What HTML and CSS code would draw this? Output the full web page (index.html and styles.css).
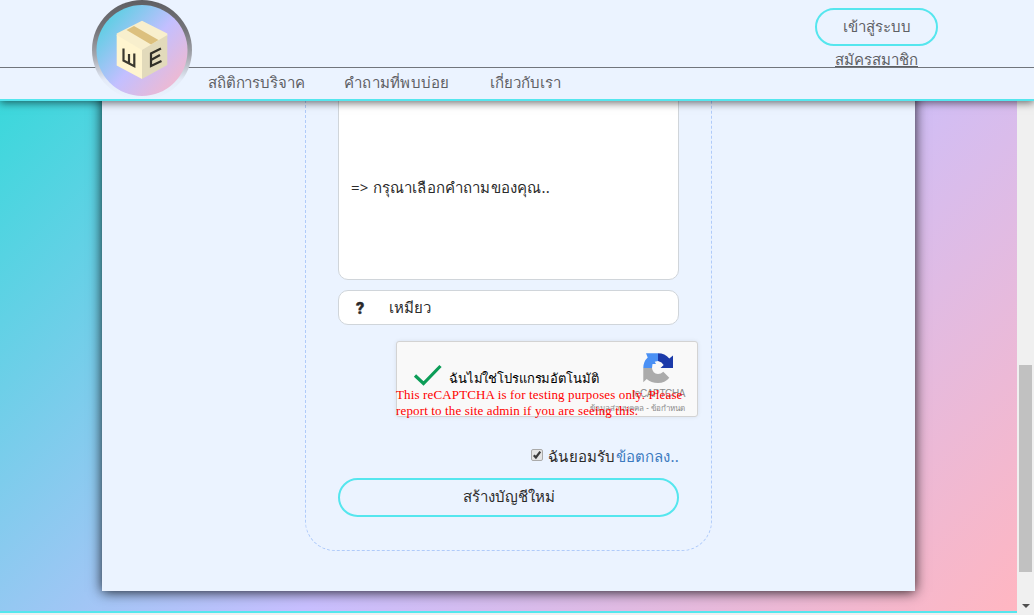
FILE: index.html
```html
<!DOCTYPE html>
<html lang="th">
<head>
<meta charset="utf-8">
<title>สร้างบัญชีใหม่</title>
<link rel="stylesheet" href="styles.css">
</head>
<body>
<header class="header">
  <div class="header-top">
    <div class="account">
      <a class="login">เข้าสู่ระบบ</a>
      <a class="signup">สมัครสมาชิก</a>
    </div>
  </div>
  <nav class="nav">
    <a class="n1">สถิติการบริจาค</a>
    <a class="n2">คำถามที่พบบ่อย</a>
    <a class="n3">เกี่ยวกับเรา</a>
  </nav>
  <svg class="logo" width="100" height="99" viewBox="0 0 100 99">
    <defs>
      <linearGradient id="ring" x1="0" y1="0" x2="0" y2="1"><stop offset="0" stop-color="#5f5f63"/><stop offset=".3" stop-color="#747479"/><stop offset=".55" stop-color="#a3a5ac"/><stop offset=".8" stop-color="#e4ebf8"/><stop offset="1" stop-color="#ebf3ff"/></linearGradient>
      <linearGradient id="fill" x1=".1" y1=".15" x2=".9" y2=".85"><stop offset="0" stop-color="#5ccfe3"/><stop offset=".53" stop-color="#c3bfff"/><stop offset="1" stop-color="#efb9d1"/></linearGradient>
    </defs>
    <circle cx="50" cy="50" r="50" fill="url(#ring)"/>
    <circle cx="50" cy="50.5" r="45.5" fill="url(#fill)"/>
    <path d="M50 20.700 75.300 33.500V36L50 50.700 24.700 36V33.500Z" fill="#f8efcd"/>
    <path d="M24.700 35 50 50V79L24.700 65.500Z" fill="#fff5cf"/>
    <path d="M75.300 35 50 50V79L75.300 65Z" fill="#e2dabb"/>
    <path d="M42 26 66.500 40 59 44.500 34.500 30Z" fill="#dcc07e"/>
    <path d="M31.500 48.500V60.500L42.300 66.200V53.500M37 54V63" fill="none" stroke="#3b392f" stroke-width="2.200"/>
    <path d="M69 48.500 59 53.500V66L69.500 61M59 60 68 55" fill="none" stroke="#302f28" stroke-width="2.200"/>
  </svg>
</header>
<main class="page">
  <section class="panel">
    <form class="form">
      <div class="question-list">=&gt; กรุณาเลือกคำถามของคุณ..</div>
      <div class="answer"><b class="mark">?</b><span>เหมียว</span></div>
      <div class="captcha">
        <svg class="check" width="30" height="22" viewBox="0 0 30 22"><path d="M2 11.500 10.500 19.500 27.500 2" fill="none" stroke="#0c9d58" stroke-width="3.200"/></svg>
        <span class="robot">ฉันไม่ใช่โปรแกรมอัตโนมัติ</span>
        <svg class="recaptcha-logo" width="32" height="32" viewBox="0 0 32 32">
          <path d="M4 1.300H16V9L12.700 9.700 14 12H10.500L10 16H1.300Q1.300 9.500 5.700 5.500Z" fill="#4a90f4"/>
          <path d="M16 1.300Q23 1.300 27.300 6.500L31 3.500V16H18.500L21.700 13 19.500 10.500 16 9Z" fill="#1c3aa9"/>
          <path d="M1.300 16H10Q10.500 21.500 16 22 19 22 21.300 19.700L27.300 25.700Q23 31 16 31 9 31 4.700 27L1.300 30.300Z" fill="#ababab"/>
        </svg>
        <div class="brand">reCAPTCHA</div>
        <div class="terms">ข้อมูลส่วนบุคคล - ข้อกำหนด</div>
        <div class="warning">This reCAPTCHA is for testing purposes only. Please<br>report to the site admin if you are seeing this.</div>
      </div>
      <div class="agree">
        <svg class="checkbox" width="12" height="12" viewBox="0 0 12 12"><rect x=".5" y=".5" width="11" height="11" rx="1.500" fill="#e4e4e4" stroke="#aaa"/><path d="M2.800 6.200 4.900 8.500 9.300 2.600" fill="none" stroke="#3b3b3b" stroke-width="2.200"/></svg>
        <span class="agree-text">ฉันยอมรับ<a class="link">ข้อตกลง..</a></span>
      </div>
      <div class="submit">สร้างบัญชีใหม่</div>
    </form>
  </section>
</main>
<div class="scrollbar"><div class="thumb"></div><div class="arrow"></div></div>
</body>
</html>
```
FILE: styles.css
```css
* { box-sizing: border-box; }
body {
  margin: 0;
  width: 1034px;
  height: 615px;
  overflow: hidden;
  position: relative;
  background: #efefef;
  color: #2b2b2b;
  font: 15px/20px "Noto Sans", "Liberation Sans", sans-serif;
}
span, .nav a { white-space: nowrap; }
.header {
  position: absolute;
  z-index: 2;
  top: 0;
  left: 0;
  width: 1034px;
  height: 101px;
  background: #ebf3ff;
  border-bottom: 2px solid #55e6ee;
  box-shadow: 0 2px 8px rgba(0, 0, 0, .55);
  color: #5e6064;
}
.header-top {
  height: 68px;
  padding: 8px 96px 0 0;
  border-bottom: 1px solid #71757c;
  display: flex;
  justify-content: flex-end;
}
.account { width: 123px; }
.login {
  display: block;
  height: 38px;
  border: 2px solid #55e6ee;
  border-radius: 19px;
  text-align: center;
  line-height: 33px;
}
.signup {
  display: block;
  margin-top: 3px;
  padding-left: 20px;
  line-height: 20px;
  text-decoration: underline;
}
.nav { display: flex; padding: 4px 0 0 208px; line-height: 20px; }
.nav .n1 { width: 136px; letter-spacing: -.15px; }
.nav .n2 { width: 146px; letter-spacing: .25px; }
.logo { position: absolute; left: 92px; top: 0; }
.page {
  width: 1017px;
  height: 613px;
  padding: 20px 102px 22px;
  background: linear-gradient(135deg, #3ad8db 6%, #c8bfff 56%, #ffb6c1 100%);
  border-bottom: 2px solid #55e6ee;
}
.panel {
  height: 571px;
  padding: 0 203px 40px;
  background: #ebf3ff;
  box-shadow: 0 1px 12px rgba(0, 0, 0, .85);
}
.form {
  height: 531px;
  padding: 40px 32px 0;
  border: 1px dashed #b0cbfa;
  border-radius: 30px;
}
.question-list {
  height: 219px;
  padding: 115px 12px 0;
  background: #fff;
  border: 1px solid #d0d5da;
  border-radius: 10px;
  letter-spacing: .17px;
}
.answer {
  display: flex;
  height: 35px;
  margin-top: 10px;
  padding: 6px 17px;
  background: #fff;
  border: 1px solid #d0d5da;
  border-radius: 10px;
}
.mark { width: 33px; font: 900 16px/23px Roboto, sans-serif; -webkit-text-stroke: .4px #222; }
.captcha {
  position: relative;
  width: 302px;
  height: 76px;
  margin: 16px 0 0 58px;
  padding: 22px 0 0 16px;
  display: flex;
  background: #f9f9f9;
  border: 1px solid #d3d3d3;
  border-radius: 3px;
  box-shadow: 0 0 4px rgba(0, 0, 0, .08);
  color: #000;
  font-size: 13px;
}
.robot { margin: 4px 0 0 6px; letter-spacing: -.13px; }
.recaptcha-logo { position: absolute; left: 245px; top: 10px; }
.brand {
  position: absolute;
  right: 12px;
  top: 46px;
  color: #8a8a8a;
  font: 10px/12px "Liberation Sans", sans-serif;
  letter-spacing: -.4px;
}
.terms {
  position: absolute;
  right: 12px;
  top: 60px;
  color: #8a8a8a;
  font-size: 8px;
  line-height: 12px;
}
.warning {
  position: absolute;
  left: -1px;
  top: 45px;
  color: #f00;
  font: 13px/16px "Liberation Serif", serif;
  letter-spacing: .14px;
  white-space: nowrap;
}
.agree {
  display: flex;
  justify-content: flex-end;
  height: 20px;
  margin-top: 29px;
}
.agree-text { letter-spacing: .18px; }
.checkbox { margin: 3px 5px 0 0; }
.link { color: #3c7ac0; }
.submit {
  height: 39px;
  margin-top: 12px;
  border: 2px solid #55e6ee;
  border-radius: 20px;
  text-align: center;
  line-height: 33px;
}
.scrollbar {
  position: absolute;
  right: 0;
  top: 0;
  width: 17px;
  height: 615px;
  padding: 365px 2px 0;
  background: #f0f0f0;
}
.thumb { height: 207px; background: #c1c1c1; }
.arrow {
  width: 0;
  margin: 32px 0 0 3px;
  border: 4px solid transparent;
  border-top-color: #505050;
  border-bottom: 0;
}
```
